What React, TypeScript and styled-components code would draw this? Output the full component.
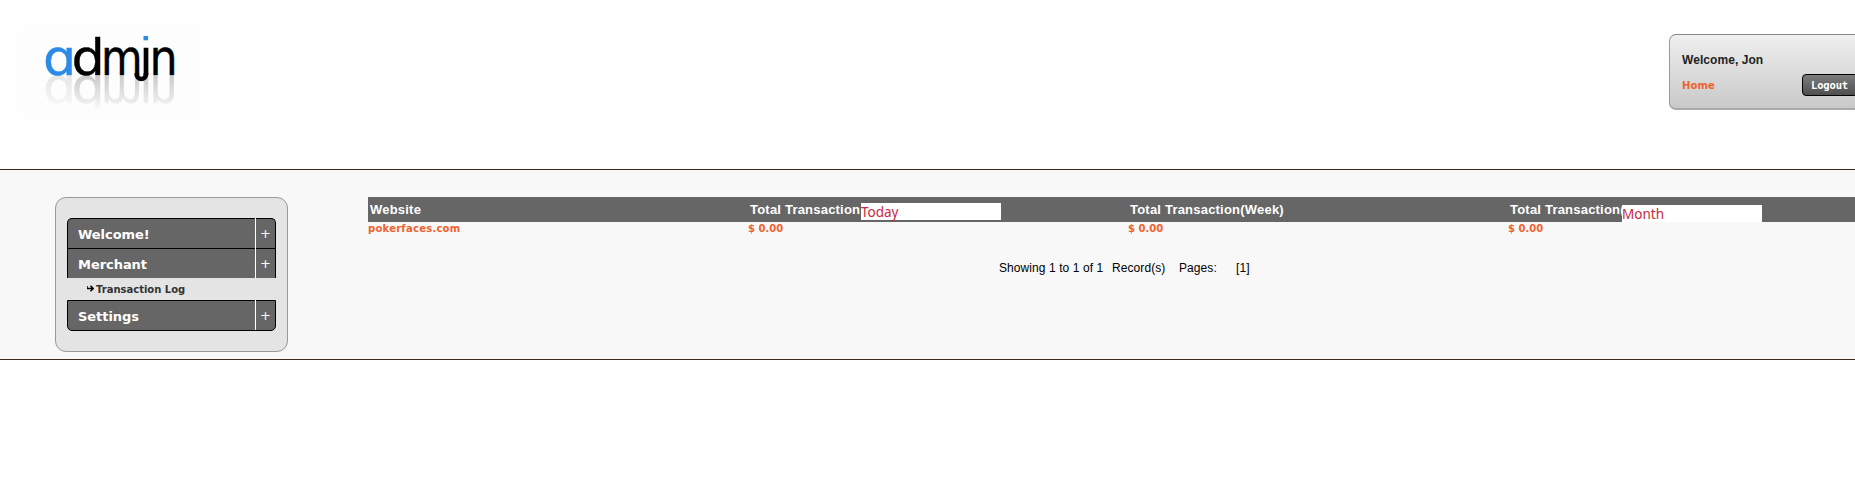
import React from "react";
import styled, { createGlobalStyle } from "styled-components";

const GlobalStyle = createGlobalStyle`
  * { box-sizing: border-box; }
  html, body { margin: 0; overflow: hidden; background: #fefefe; }
`;

const verdana = `"DejaVu Sans", Verdana, sans-serif`;
const arial = `"Liberation Sans", Arial, sans-serif`;

const Page = styled.div`
  width: 100%;
  height: 501px;
  overflow: hidden;
  font-family: ${arial};
`;
const Header = styled.header`
  height: 170px;
  display: flex;
  justify-content: space-between;
  border-bottom: 1px solid #3e2a18;
`;
const LogoBox = styled.div`
  width: 174px;
  height: 85px;
  margin: 30px 0 0 23px;
  background: #fdfdfd;
  svg { display: block; }
`;
const UserPanel = styled.div`
  width: 206px;
  height: 76px;
  margin: 34px -20px 0 0;
  padding: 18px 20px 0 12px;
  border: 1px solid #999;
  border-top-color: #888;
  border-bottom: 2px solid #aaa;
  border-radius: 7px;
  background: linear-gradient(#efefef, #c9c9c9);
`;
const Greeting = styled.div`
  height: 15px;
  font: bold 12px/15px ${arial};
  letter-spacing: 0.06px;
  color: #222;
`;
const UserActions = styled.div`
  display: flex;
  justify-content: space-between;
  padding-top: 6px;
`;
const HomeLink = styled.a`
  font: bold 10px/24px ${verdana};
  height: 22px;
  letter-spacing: 0.1px;
  color: #ee6230;
`;
const LogoutButton = styled.button`
  flex: none;
  width: 56px;
  height: 22px;
  margin-right: -4px;
  padding: 0 0 0 8px;
  text-align: left;
  border: 1px solid #000;
  border-radius: 4px;
  background: linear-gradient(#7d7d7d, #4e4e4e);
  color: #fff;
  font: bold 10.5px/20px "DejaVu Sans Mono", monospace;
  letter-spacing: -0.15px;
`;
const Body = styled.main`
  height: 190px;
  display: flex;
  align-items: flex-start;
  padding: 27px 0 0 55px;
  background: #f8f8f8;
  border-bottom: 1px solid #3e2a18;
`;
const Sidebar = styled.nav`
  flex: none;
  width: 233px;
  height: 155px;
  padding: 20px 11px;
  border: 1px solid #999;
  border-radius: 11px;
  background: #e4e4e4;
`;
const MenuItem = styled.div<{ $first?: boolean; $last?: boolean }>`
  display: flex;
  height: ${(p) => (p.$last ? 31 : 30)}px;
  border: 1px solid #000;
  border-bottom-width: ${(p) => (p.$last ? 1 : 0)}px;
  border-radius: ${(p) => (p.$first ? "5px 5px 0 0" : p.$last ? "0 0 5px 5px" : "0")};
  background: #666;
  color: #fff;
`;
const MenuLabel = styled.span`
  width: 187px;
  padding-left: 10px;
  font: bold 13px/31px ${verdana};
  letter-spacing: -0.05px;
`;
const MenuToggle = styled.span`
  flex: 1;
  margin-top: -1px;
  border-left: 1px solid #fff;
  text-align: center;
  font: 13px/31px ${verdana};
`;
const SubItem = styled.div`
  height: 22px;
  display: flex;
  align-items: center;
  padding: 2px 0 0 20px;
  font: bold 10px/20px ${verdana};
  color: #333;
  svg { margin: -4px 2px 0 0; }
`;
const Content = styled.section`
  flex: 1;
  margin-left: 80px;
`;
const Row = styled.div<{ $head?: boolean }>`
  display: grid;
  grid-template-columns: 380px 380px 380px 1fr;
  height: ${(p) => (p.$head ? 25 : 14)}px;
  background: ${(p) => (p.$head ? "#666" : "transparent")};
`;
const HeadCell = styled.div`
  position: relative;
  padding-left: 2px;
  font: bold 13px/25px ${arial};
  letter-spacing: 0.21px;
  color: #fff;
  white-space: nowrap;
`;
const Cell = styled.div<{ $wide?: boolean }>`
  font: bold 10px/14px ${verdana};
  letter-spacing: ${(p) => (p.$wide ? 0.25 : 0)}px;
  color: #ee6230;
`;
const Patch = styled.span<{ $x: number; $y: number; $lead: number }>`
  position: absolute;
  left: ${(p) => p.$x}px;
  top: ${(p) => p.$y}px;
  width: 140px;
  height: 17px;
  background: #fff;
  color: #c9283d;
  font: 13.5px/${(p) => p.$lead}px "Noto Sans", sans-serif;
  letter-spacing: 0;
`;
const Pager = styled.div`
  display: flex;
  margin: 25px 0 0 631px;
  font: 12px/14px ${arial};
  letter-spacing: 0.08px;
  color: #000;
  white-space: nowrap;
`;
const PagerPart = styled.span<{ $w: number }>`
  width: ${(p) => p.$w}px;
`;

const Wordmark = () => (
  <g fontFamily="DejaVu Sans, sans-serif" fontSize="49.5" strokeWidth=".4">
    <text x="20" y="44.5" textLength="33.3" lengthAdjust="spacingAndGlyphs" fill="#2b8be6" stroke="#2b8be6">ɑ</text>
    <g fill="#000" stroke="#000">
      <text x="48.5" y="44.5" textLength="33.3" lengthAdjust="spacingAndGlyphs">d</text>
      <text x="78.1" y="44.5" textLength="41.6" lengthAdjust="spacingAndGlyphs">m</text>
      <text x="116.4" y="44.5" textLength="13" lengthAdjust="spacingAndGlyphs">ı</text>
      <text x="126.5" y="44.5" textLength="28.1" lengthAdjust="spacingAndGlyphs">n</text>
    </g>
    <path d="M113.8 43v1.4a4.55 4.55 0 0 0 9.1 0v-1.4" fill="none" stroke="#000" strokeWidth="4.6" />
  </g>
);

const Logo = () => (
  <svg width="174" height="85" viewBox="0 0 174 85" role="img" aria-label="admin">
    <defs>
      <linearGradient id="fade" x1="0" y1="45" x2="0" y2="80" gradientUnits="userSpaceOnUse">
        <stop offset="0" stopColor="#fff" stopOpacity=".2" />
        <stop offset=".75" stopColor="#fff" stopOpacity=".07" />
        <stop offset="1" stopColor="#fff" stopOpacity="0" />
      </linearGradient>
      <mask id="reflection" maskUnits="userSpaceOnUse" x="0" y="45" width="174" height="40">
        <rect y="45" width="174" height="40" fill="url(#fade)" />
      </mask>
      <filter id="soft">
        <feGaussianBlur stdDeviation=".7" />
        <feColorMatrix type="saturate" values="0" />
      </filter>
    </defs>
    <g mask="url(#reflection)" aria-hidden="true">
      <g transform="translate(0 90) scale(1 -1)" filter="url(#soft)"><Wordmark /></g>
    </g>
    <Wordmark />
    <rect x="120.5" y="6" width="4.6" height="4.3" fill="#2b8be6" />
  </svg>
);

const Arrow = () => (
  <svg width="7" height="7" viewBox="0 0 7 7">
    <path d="M0 1v2.5h6M3.5 .7l2.7 2.8-2.7 2.8" fill="none" stroke="#000" strokeWidth="1.5" />
  </svg>
);

export default function App() {
  return (
    <Page>
      <GlobalStyle />
      <Header>
        <LogoBox><Logo /></LogoBox>
        <UserPanel>
          <Greeting>Welcome, Jon</Greeting>
          <UserActions>
            <HomeLink>Home</HomeLink>
            <LogoutButton>Logout</LogoutButton>
          </UserActions>
        </UserPanel>
      </Header>
      <Body>
        <Sidebar>
          <MenuItem $first><MenuLabel>Welcome!</MenuLabel><MenuToggle>+</MenuToggle></MenuItem>
          <MenuItem><MenuLabel>Merchant</MenuLabel><MenuToggle>+</MenuToggle></MenuItem>
          <SubItem><Arrow />Transaction Log</SubItem>
          <MenuItem $last><MenuLabel>Settings</MenuLabel><MenuToggle>+</MenuToggle></MenuItem>
        </Sidebar>
        <Content>
          <Row $head>
            <HeadCell>Website</HeadCell>
            <HeadCell>Total Transaction<Patch $x={113} $y={6} $lead={19}>Today</Patch></HeadCell>
            <HeadCell>Total Transaction(Week)</HeadCell>
            <HeadCell>Total Transaction(Today)<Patch $x={114} $y={8} $lead={18}>Month</Patch></HeadCell>
          </Row>
          <Row>
            <Cell $wide>pokerfaces.com</Cell>
            <Cell>$ 0.00</Cell>
            <Cell>$ 0.00</Cell>
            <Cell>$ 0.00</Cell>
          </Row>
          <Pager>
            <PagerPart $w={113}>Showing 1 to 1 of 1</PagerPart>
            <PagerPart $w={67}>Record(s)</PagerPart>
            <PagerPart $w={57}>Pages:</PagerPart>
            <PagerPart $w={20}>[1]</PagerPart>
          </Pager>
        </Content>
      </Body>
    </Page>
  );
}
